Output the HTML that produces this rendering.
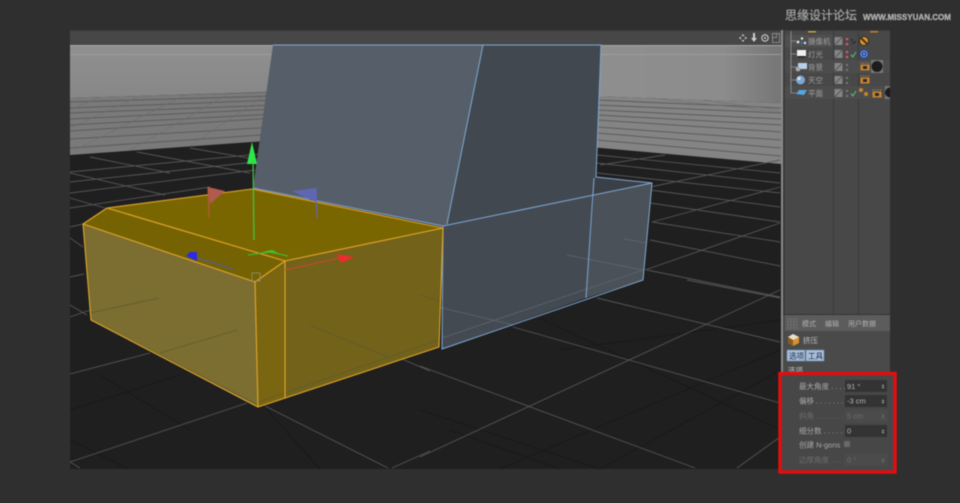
<!DOCTYPE html>
<html><head><meta charset="utf-8"><style>
html,body{margin:0;padding:0;background:#2f2f2f;width:960px;height:503px;overflow:hidden}
svg{display:block;filter:blur(.45px)}
text{font-family:"Liberation Sans","Noto Sans CJK SC",sans-serif}
</style></head><body>
<svg width="960" height="503" viewBox="0 0 960 503" xmlns="http://www.w3.org/2000/svg">
<defs>
<linearGradient id="wr" x1="0" x2="1" y1="0" y2="0"><stop offset="0" stop-color="#8f8f8f"/><stop offset=".7" stop-color="#8c8c8c"/><stop offset="1" stop-color="#767676"/></linearGradient>
<linearGradient id="wl" x1="0" x2="0" y1="0" y2="1"><stop offset="0" stop-color="#909090"/><stop offset="1" stop-color="#878787"/></linearGradient>
<clipPath id="vp"><rect x="70" y="45" width="711" height="424"/></clipPath>
<clipPath id="pn"><rect x="785" y="31" width="105" height="284"/></clipPath>
<g id="tag"><rect x="-4.500" y="-2.500" width="9" height="6" fill="#c9842c"/><rect x="-2" y="-1" width="4" height="3" fill="#2a2a2a"/><path d="M-4-4.500v1M-1.500-4.500v1M1-4.500v1M3.500-4.500v1" stroke="#b89a60" stroke-width="1"/></g>
<g id="sq"><rect x="-4" y="-4" width="8" height="8" fill="#858585"/><path d="M-4 4L4-4" stroke="#5c5c5c" stroke-width="1.200"/></g>
</defs>

<rect width="960" height="503" fill="#2f2f2f"/>

<!-- watermark -->
<text x="785" y="19.500" font-size="12" fill="#b8b8b8" stroke="#8a8a8a" stroke-width=".3" textLength="72" lengthAdjust="spacingAndGlyphs">思缘设计论坛</text>
<text x="863" y="20" font-size="8.500" font-weight="bold" fill="#a8a8a8" stroke="#c8c8c8" stroke-width=".25" textLength="88" lengthAdjust="spacingAndGlyphs">WWW.MISSYUAN.COM</text>

<!-- viewport -->
<rect x="70" y="30" width="711" height="15" fill="#474747"/>
<rect x="70" y="30" width="711" height="1" fill="#3a3a3a"/>
<g clip-path="url(#vp)">
<rect x="70" y="45" width="711" height="424" fill="#1f1f1f"/>
<!-- wall -->
<polygon points="70,45 300,45 300,92 270,92 70,98" fill="url(#wl)"/>
<polygon points="590,45 781,45 781,103 590,96" fill="url(#wr)"/>
<rect x="70" y="45" width="711" height="1" fill="#a8a8a8"/>
<rect x="70" y="54" width="711" height="1" fill="#9c9c9c"/>
<polygon points="70,98 280,92 280,140 70,155" fill="#7a7a7a"/>
<polygon points="590,96 781,103 781,164 590,147" fill="#848484"/>
<path d="M70 102L275 96M70 108L275 100M70 113L275 105M70 119L275 109M70 125L275 114M70 131L275 118M70 139L275 127M70 148L275 134M597 100L781 108M597 105L781 113M597 110L781 119M597 115L781 125M597 120L781 132M597 127L781 140M597 133L781 148M597 140L781 156" stroke="#5c5c5c" stroke-width="1" fill="none"/>
<path d="M100 97L70 110M140 96L70 128M185 95L75 150M230 93L130 150M270 92L190 146M650 98L781 112M700 100L781 110" stroke="#6e6e6e" stroke-width=".6" fill="none"/>
<!-- floor grid faint -->
<path d="M70 410L180 375M70 440L130 470M100 375L190 430M245 385L320 469M420 410L600 469M500 469L780 350M600 469L781 370M500 300L781 430M450 430L560 469M560 350L781 320" stroke="#191919" stroke-width="1" fill="none"/>
<!-- floor grid bright -->
<path d="M70 172L260 154M70 182L255 162M70 193L255 170M70 208L210 187M90 157L170 173M137 152L250 173M190 148L260 160M70 173L165 195M70 198L105 208M70 227L83 224M70 238L83 247M70 277L84 274M70 305L87 315M70 317L90 310
M70 374L150 353M70 462L247 403M265 406L388 468M392 468L430 451M402 359L430 371M70 462L80 468
M420 366L695 468M420 457L780 290M513 327L780 403M597 298L780 342M687 280L780 298M737 468L780 437
M647 270L780 297M650 240L780 266M652 222L780 242M650 203L780 222M650 190L780 207M597 173L780 193M597 163L780 183M597 155L780 173
M645 270L780 223M652 222L780 187M650 187L780 160M600 165L665 155" stroke="#565656" stroke-width=".9" fill="none"/>
</g>

<!-- blue object -->
<polygon points="273,45 483,45 447,224 443,227 253,188" fill="#565f69"/>
<polygon points="483,45 601,45 596,177 594,195 443,226 447,224" fill="#414850"/>
<polygon points="596,177 652,183 594,195" fill="#3a4047"/>
<polygon points="443,226 594,195 586,298 442,349" fill="#434a52"/>
<polygon points="594,195 652,183 643,280 586,298" fill="#4a5159"/>
<path d="M430 305L513 325M442 338L643 270M567 255L643 270M624 239L647 243" stroke="#5d6670" stroke-width=".8" fill="none"/>
<path d="M273 45H601L596 177L652 183L643 280L442 349L443 226L253 188M483 45L447 224M443 226L652 183M594 178L586 298" stroke="#7fa8d4" stroke-width="1" fill="none"/>

<!-- yellow object -->
<polygon points="107,208 252,189 443,228 285,261" fill="#7a6600"/>
<polygon points="83,224 107,208 285,261 255,282" fill="#756303"/>
<polygon points="83,224 255,282 258,407 91,320" fill="#7b6e30"/>
<polygon points="255,282 285,261 285,398 258,407" fill="#7a6510"/>
<polygon points="285,261 443,228 439,347 285,398" fill="#72621a"/>
<path d="M91 320L258 405M90 313L159 298M160 353L237 330M258 402L439 340M310 325L390 358M420 295L443 302" stroke="#5f5a30" stroke-width=".8" fill="none"/>
<path d="M83 224L107 208L252 189L443 228L439 347L258 407L91 320ZM107 208L285 261L443 228M83 224L255 282L285 261M255 282L258 407M285 261V398" stroke="#e5a62a" stroke-width="1.100" fill="none" stroke-linejoin="round"/>
<rect x="252" y="273" width="8" height="8" fill="none" stroke="#8b8b70" stroke-width=".9"/>

<!-- axes -->
<path d="M252 142L257 164H247Z" fill="#2ee84a"/>
<path d="M253 160L254 240" stroke="#3ecc3e" stroke-width="1.200"/>
<path d="M248 255L270 252L288 256" stroke="#37c837" stroke-width="1" fill="none"/>
<path d="M262 252L272 250L278 253Z" fill="#37c837"/>
<path d="M197 261L186 256L190 252H197Z" fill="#2a2ae8"/>
<path d="M198 258L233 269" stroke="#5a5a98" stroke-width="1.200"/>
<path d="M285 270L340 258" stroke="#c04a2a" stroke-width="1.200"/>
<path d="M337 254L354 257L341 263Z" fill="#ee2c2c"/>
<path d="M209 217L208 187" stroke="#b85a3a" stroke-width="1.200"/>
<path d="M208 187L225 191L210 204Z" fill="#b25a50"/>
<path d="M317 218L316 188" stroke="#6464b8" stroke-width="1.200"/>
<path d="M317 188L292 191L315 202Z" fill="#5f66b4"/>

<!-- top-right viewport icons -->
<g fill="#cfcfcf" stroke="none">
<path d="M743 34l1.500 2h-3zM743 42l1.500-2h-3zM739 38l2-1.500v3zM747 38l-2-1.500v3z"/>
<path d="M753 33h2v5h2l-3 4-3-4h2z"/>
</g>
<circle cx="765" cy="38" r="3.200" fill="none" stroke="#cfcfcf" stroke-width="1.100"/><circle cx="765" cy="38" r="1" fill="#cfcfcf"/>
<rect x="772.500" y="33.500" width="7" height="9" fill="none" stroke="#888"/><rect x="772.500" y="33.500" width="4" height="4" fill="none" stroke="#888"/>

<!-- object manager -->
<rect x="781" y="30" width="2" height="439" fill="#8a8a8a"/>
<rect x="783" y="30" width="107" height="285" fill="#3c3c3c"/>
<rect x="785" y="31" width="105" height="284" fill="#484848"/>
<rect x="833" y="31" width="1" height="284" fill="#3a3a3a"/>
<rect x="858" y="31" width="1" height="284" fill="#3a3a3a"/>
<g clip-path="url(#pn)">
<rect x="785" y="35" width="48" height="12" fill="#4f4f4f"/>
<rect x="785" y="60" width="105" height="13" fill="#4c4c4c"/>
<rect x="785" y="86" width="105" height="13" fill="#4c4c4c"/>
<path d="M791 31V93H796M791 41H796M791 54H796M791 67H796M791 80H796" stroke="#999" stroke-width=".8" fill="none"/>
<rect x="808" y="31" width="8" height="1.500" fill="#c8a040"/><rect x="870" y="31" width="8" height="1.500" fill="#c8801f"/>
<!-- object icons -->
<g fill="#dfe7ee"><circle cx="798" cy="42" r="1.400"/><circle cx="802" cy="38.500" r="1.200" fill="#cfd"/><circle cx="802" cy="43" r="1.400" fill="#3a6ea0"/><circle cx="805" cy="43" r="1.200"/></g>
<rect x="797" y="50" width="9" height="6" fill="#f0f0f0"/><rect x="798" y="56" width="7" height="1.500" fill="#222"/>
<rect x="798" y="63" width="9" height="6" fill="#b9d0ea"/><circle cx="798" cy="69" r="2.400" fill="#aaa"/>
<circle cx="800.500" cy="80" r="4.500" fill="#7ea6d0"/><circle cx="799" cy="78.500" r="1.700" fill="#cfe0f0"/>
<path d="M796 94L799 90H807L804 95Z" fill="#56a6e0"/>
<g font-size="7.500" fill="#a0a0a0">
<text x="808" y="44">摄像机</text><text x="808" y="57">灯光</text><text x="808" y="70">背景</text><text x="808" y="83">天空</text><text x="808" y="96">平面</text>
</g>
<use href="#sq" x="838.500" y="41"/><use href="#sq" x="838.500" y="54"/><use href="#sq" x="838.500" y="67"/><use href="#sq" x="838.500" y="80"/><use href="#sq" x="838.500" y="93"/>
<g fill="#e0556a"><circle cx="847" cy="39" r="1.300"/><circle cx="847" cy="44" r="1.300"/><circle cx="847" cy="52" r="1.300"/><circle cx="847" cy="57" r="1.300"/></g>
<g fill="#777"><circle cx="847" cy="65" r="1.200"/><circle cx="847" cy="70" r="1.200"/><circle cx="847" cy="78" r="1.200"/><circle cx="847" cy="83" r="1.200"/><circle cx="847" cy="91" r="1.200"/><circle cx="847" cy="96" r="1.200"/></g>
<g fill="#222"><circle cx="852" cy="40" r=".9"/><circle cx="855" cy="42" r=".9"/><circle cx="853" cy="43" r=".9"/></g>
<path d="M851 54.500L852.800 57L856 52M851 93.500L852.800 96L856 91" stroke="#5cb87a" stroke-width="1.100" fill="none"/>
<circle cx="864" cy="41" r="4.500" fill="#d8923a" stroke="#3a2a10" stroke-width="1"/><path d="M861 38L867 44" stroke="#3a2a10" stroke-width="1.800"/>
<circle cx="864" cy="54" r="4.800" fill="#2a4a9a"/><circle cx="864" cy="54" r="3" fill="none" stroke="#8fb0e0" stroke-width=".8"/><circle cx="864" cy="54" r="1" fill="#8fb0e0"/>
<use href="#tag" x="865" y="67"/><use href="#tag" x="865" y="80"/><use href="#tag" x="877" y="94"/>
<rect x="871" y="60" width="12" height="13" fill="#777"/><circle cx="877" cy="66.500" r="5.500" fill="#1c1c1c"/>
<rect x="885" y="86" width="8" height="13" fill="#777"/><circle cx="890" cy="92.500" r="5" fill="#1c1c1c"/>
<circle cx="861" cy="90" r="2" fill="#c9842c"/><circle cx="866" cy="94" r="2" fill="#c9842c"/>
</g>

<!-- attribute manager -->
<rect x="783" y="315" width="107" height="158" fill="#4a4a4a"/>
<rect x="785" y="315" width="105" height="16" fill="#5c5c5c"/>
<rect x="783" y="314" width="107" height="1" fill="#333"/>
<g stroke="#6e6e6e" stroke-width=".8"><path d="M787 319H797M787 322H797M787 325H797M787 328H797M788 318V329M791 318V329M794 318V329M797 318V329"/></g>
<g font-size="7" fill="#b0b0b0"><text x="802" y="326">模式</text><text x="825" y="326">编辑</text><text x="848" y="326">用户数据</text></g>
<path d="M793 334L799 337V343L793 346L788 343V337Z" fill="#d9922e"/><path d="M788 337L793 340L799 337L793 334Z" fill="#e8e0c8"/><path d="M793 340V346L788 343V337Z" fill="#8a5a20"/>
<text x="803" y="343" font-size="7.500" fill="#c0c0c0">挤压</text>
<rect x="787" y="350" width="18" height="11" fill="#a7bfdc" stroke="#6f89aa" stroke-width=".6"/>
<rect x="806" y="350" width="18" height="11" fill="#a7bfdc" stroke="#6f89aa" stroke-width=".6"/>
<g font-size="7.500" fill="#1e2a3a"><text x="789" y="358.500">选项</text><text x="808" y="358.500">工具</text></g>
<text x="788" y="373" font-size="7.500" fill="#c0c0c0">选项</text>

<rect x="780" y="373.500" width="115" height="98.500" fill="#474747"/>
<g font-size="7.500" fill="#a8a8a8">
<text x="799" y="389">最大角度 . . . .</text>
<text x="799" y="403.500">偏移 . . . . . . . .</text>
<text x="799" y="433.500">细分数 . . . . . .</text>
<text x="799" y="447.500">创建 N-gons</text>
</g>
<g font-size="7.500" fill="#6c6c6c">
<text x="799" y="418.500">斜角 . . . . . . . .</text>
<text x="799" y="462.500">边厚角度 . . . .</text>
</g>
<rect x="845" y="380" width="42" height="12" fill="#333"/>
<rect x="845" y="395" width="42" height="12" fill="#333"/>
<rect x="845" y="410" width="42" height="12" fill="#4b4b4b"/>
<rect x="845" y="425" width="42" height="12" fill="#333"/>
<rect x="845" y="454" width="42" height="12" fill="#4b4b4b"/>
<g font-size="7.500" fill="#b8b8b8"><text x="847" y="389">91 °</text><text x="847" y="403.500">-3 cm</text><text x="847" y="433.500">0</text></g>
<g font-size="7.500" fill="#6c6c6c"><text x="847" y="418.500">5 cm</text><text x="847" y="462.500">0 °</text></g>
<g fill="#b0b0b0"><path d="M883 384.500l1.500 1.500h-3zM883 388.500l1.500-1.500h-3zM883 399.500l1.500 1.500h-3zM883 403.500l1.500-1.500h-3zM883 429.500l1.500 1.500h-3zM883 433.500l1.500-1.500h-3z"/></g>
<g fill="#707070"><path d="M883 414.500l1.500 1.500h-3zM883 418.500l1.500-1.500h-3zM883 458.500l1.500 1.500h-3zM883 462.500l1.500-1.500h-3z"/></g>
<rect x="844" y="441" width="6" height="6" fill="#6a6a6a" stroke="#555" stroke-width=".6"/>

<!-- red box -->
<rect x="780" y="373.500" width="115" height="98.500" fill="none" stroke="#df0f0f" stroke-width="3.500"/>
</svg>
</body></html>
